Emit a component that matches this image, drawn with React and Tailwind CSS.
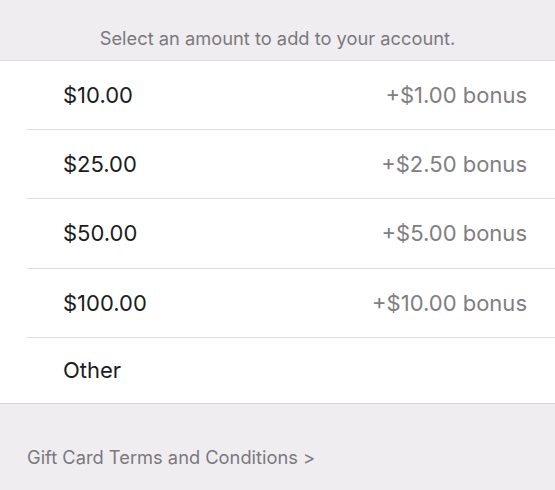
export default function App() {
  const rows = [
    ["$10.00", "+$1.00 bonus", "h-[69px]"],
    ["$25.00", "+$2.50 bonus", "h-[69px]"],
    ["$50.00", "+$5.00 bonus", "h-[70px]"],
    ["$100.00", "+$10.00 bonus", "h-[69px]"],
  ];
  return (
    <div className="w-[555px] h-[490px] bg-[#efedf0] overflow-hidden" style={{ fontFamily: "Inter, 'Noto Sans', sans-serif" }}>
      <div className="h-[61px] flex items-end justify-center pb-[10px] border-b border-[#dcdadf]">
        <span className="text-[18.3px] text-[#7b787e] leading-[24px]">Select an amount to add to your account.</span>
      </div>
      <div className="bg-white border-b border-[#d8d6da]">
        {rows.map(([a, b, h]) => (
          <div key={a} className="pl-[27px]">
            <div className={`${h} flex items-center justify-between pl-[36px] pr-[28px] border-b border-[#dedde0]`}>
              <span className="text-[22px] text-[#1c1c1e]">{a}</span>
              <span className="text-[22px] text-[#7f7e82]">{b}</span>
            </div>
          </div>
        ))}
        <div className="h-[65px] flex items-center pl-[63px]">
          <span className="text-[22px] text-[#1c1c1e]">Other</span>
        </div>
      </div>
      <div className="pl-[27px] pt-[41px]">
        <span className="text-[18.3px] text-[#7b787e] leading-[24px]">Gift Card Terms and Conditions &gt;</span>
      </div>
    </div>
  );
}
